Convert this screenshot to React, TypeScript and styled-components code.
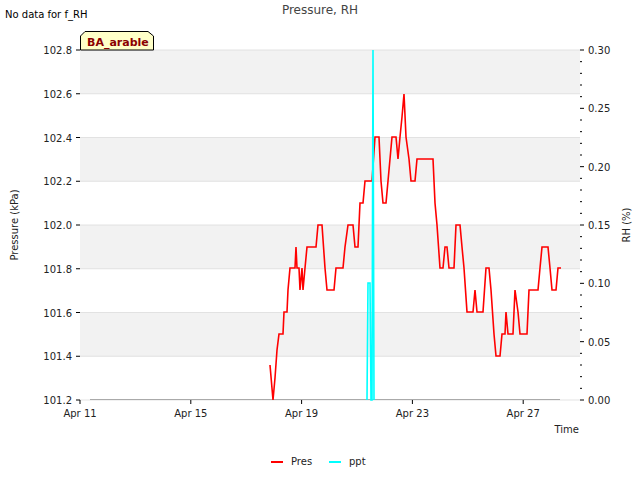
import React from "react";
import styled, { createGlobalStyle } from "styled-components";

const Global = createGlobalStyle`
  body { margin: 0; background: #fff; font-family: "DejaVu Sans", sans-serif; }
`;
const Page = styled.div`width: 640px; height: 480px; position: relative; overflow: hidden;`;
const Chart = styled.svg`display: block; font-family: "DejaVu Sans", sans-serif;`;

const X0 = 80, X1 = 580, Y0 = 50, Y1 = 400;
const pY = (v: number) => Y1 - ((v - 101.2) / 1.6) * (Y1 - Y0);
const rY = (v: number) => Y1 - (v / 0.3) * (Y1 - Y0);
const dayX = (d: number) => 80 + (d - 11) * 27.7;

const red = "270,365 273,400 275,378 277,350 279,334 283,334 284,312 287,312 288,290 290,268 295,268 296,247 297,268 299,268 300,290 302,268 303,290 305,268 307,247 316,247 318,225 322,225 325,268 327,290 334,290 336,268 343,268 345,247 348,225 353,225 355,247 358,247 360,203 363,203 365,181 372,181 375,137 379,137 381,181 383,203 386,203 388,181 392,137 396,137 398,159 400,137 402,117 404,94 406,137 409,159 411,181 415,181 417,159 433,159 435,203 437,225 440,268 443,268 445,247 447,247 449,268 454,268 456,225 460,225 462,247 464,268 467,312 473,312 475,290 477,312 483,312 486,268 489,268 491,290 494,334 496,356 500,356 502,334 505,334 506,312 508,334 513,334 515,290 518,312 520,334 527,334 529,290 538,290 540,268 542,247 548,247 550,268 552,290 556,290 558,268 561,268";
const cyan = "367,400 368,283 370,283 371,400 372,400 373,50 374,400";

export default function App() {
  const pTicks = [101.2, 101.4, 101.6, 101.8, 102.0, 102.2, 102.4, 102.6, 102.8];
  const rTicks = [0, 0.05, 0.1, 0.15, 0.2, 0.25, 0.3];
  const minors = Array.from({ length: 31 }, (_, i) => i * 0.01);
  const days = [11, 15, 19, 23, 27];
  return (
    <Page>
      <Global />
      <Chart width={640} height={480}>
        {[0, 2, 4, 6].map(i => (
          <rect key={i} x={X0} y={pY(102.8 - i * 0.2)} width={X1 - X0} height={pY(101.2) - pY(101.4)} fill="#f2f2f2" />
        ))}
        {pTicks.map(v => <line key={v} x1={X0} x2={X1} y1={pY(v)} y2={pY(v)} stroke="#dcdcdc" strokeWidth={0.8} />)}
        <line x1={90} x2={560} y1={399.5} y2={399.5} stroke="#aaa" strokeWidth={1.2} />
        <polyline points={red} fill="none" stroke="#ff0000" strokeWidth={1.6} />
        <polyline points={cyan} fill="none" stroke="#00ffff" strokeWidth={1.6} />
        {pTicks.map(v => (
          <g key={v}>
            <line x1={X0 - 4} x2={X0} y1={pY(v)} y2={pY(v)} stroke="#000" />
            <text x={X0 - 8} y={pY(v) + 4} fontSize={10} textAnchor="end" fill="#222">{v.toFixed(1)}</text>
          </g>
        ))}
        {minors.map((v, i) => <line key={i} x1={X1} x2={X1 + (i % 5 === 0 ? 4 : 2)} y1={rY(v)} y2={rY(v)} stroke="#000" />)}
        {rTicks.map(v => <text key={v} x={X1 + 8} y={rY(v) + 4} fontSize={10} fill="#222">{v.toFixed(2)}</text>)}
        {days.map(d => (
          <g key={d}>
            <line x1={dayX(d)} x2={dayX(d)} y1={Y1} y2={Y1 + 4} stroke="#000" />
            <text x={dayX(d)} y={Y1 + 17} fontSize={10} textAnchor="middle" fill="#222">Apr {d}</text>
          </g>
        ))}
        <text x={320} y={14} fontSize={12} textAnchor="middle" fill="#444">Pressure, RH</text>
        <text x={5} y={18} fontSize={10} fill="#000">No data for f_RH</text>
        <text x={579} y={433} fontSize={10} textAnchor="end" fill="#222">Time</text>
        <text transform="translate(18 225) rotate(-90)" fontSize={10} textAnchor="middle" fill="#222">Pressure (kPa)</text>
        <text transform="translate(630 225) rotate(-90)" fontSize={10} textAnchor="middle" fill="#222">RH (%)</text>
        <path d="M80.5 50 V36 L85 31.5 H148 L153.5 36 V50 Z" fill="#ffffc8" stroke="#000" strokeWidth={1} />
        <text x={87} y={46} fontSize={11} fontWeight="bold" fill="#8b0000">BA_arable</text>
        <line x1={271} x2={283} y1={462} y2={462} stroke="#ff0000" strokeWidth={2} />
        <text x={291} y={465} fontSize={10} fill="#222">Pres</text>
        <line x1={329} x2={341} y1={462} y2={462} stroke="#00ffff" strokeWidth={2} />
        <text x={349} y={465} fontSize={10} fill="#222">ppt</text>
      </Chart>
    </Page>
  );
}
